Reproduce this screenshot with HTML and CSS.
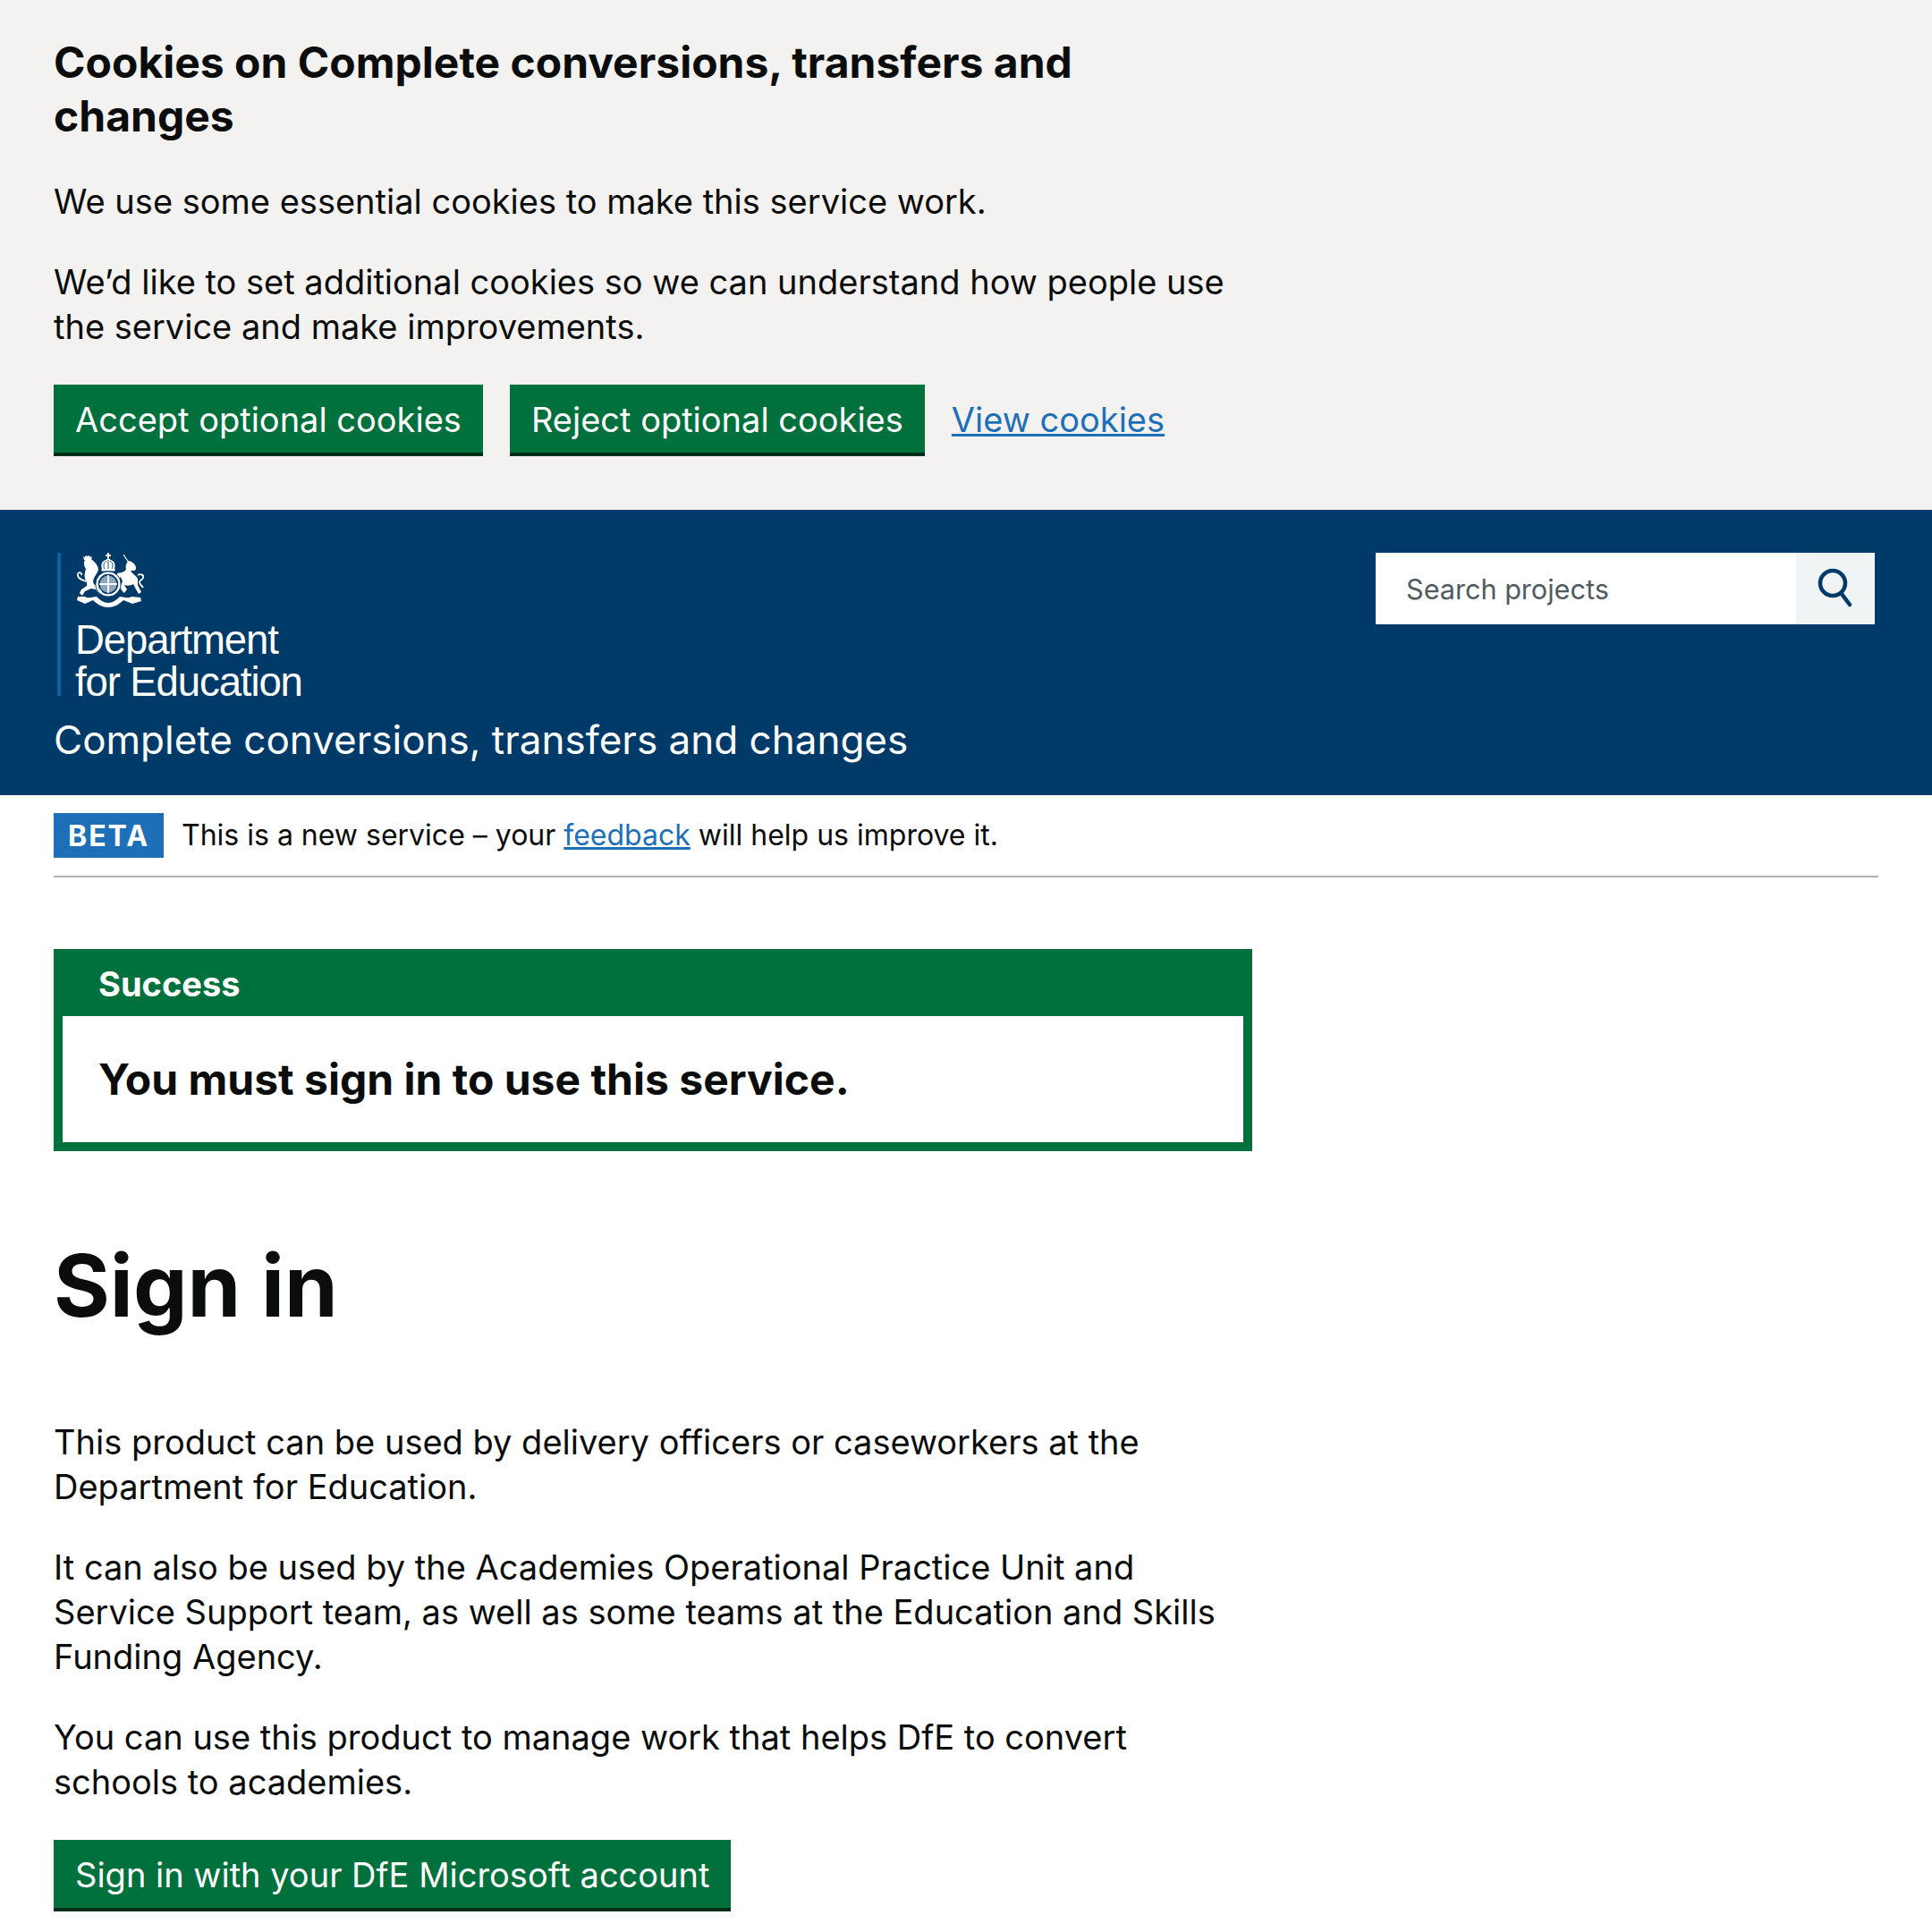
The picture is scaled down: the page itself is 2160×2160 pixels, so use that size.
FILE: index.html
```html
<!DOCTYPE html>
<html lang="en">
<head>
<meta charset="utf-8">
<title>Sign in</title>
<link rel="stylesheet" href="styles.css">
</head>
<body>
<section class="cookie">
  <h2 class="cookie-title">Cookies on Complete conversions, transfers and changes</h2>
  <div class="cookie-copy">
    <p>We use some essential cookies to make this service work.</p>
    <p>We’d like to set additional cookies so we can understand how people use the service and make improvements.</p>
  </div>
  <div class="cookie-actions">
    <a class="btn" href="#">Accept optional cookies</a>
    <a class="btn" href="#">Reject optional cookies</a>
    <a class="link" href="#">View cookies</a>
  </div>
</section>
<header class="header">
  <div class="header-top">
    <div class="logo">
      <svg class="crest" viewBox="5 6 80 64" aria-hidden="true">
        <g fill="#fff">
          <path d="M42 6h2v2h2v2h-2v2h-2v-2h-2V8h2z"/>
          <path d="M36 24C34 18 37 15 40 14l3-2 3 2c3 1 6 4 4 10z"/>
          <path d="M35.500 24h15v2.500h-15z"/>
          <path d="M16 14l-1-4 2 1 1-2 2 1 2-1 1 2 2-1-1 4z"/>
          <path d="M17 14C15 17 16 21 18 24 17 27 16 31 17 35c1 3 3 5 2 8l-6 4-2 4 3 3 3-5 7-3 5 1 4 5 3-3-5-5-4-3c-2-3 0-7 2-10s4-6 2-10c-2-4-5-6-7-8z"/>
          <path d="M66 15c4 1 8 4 8 8s-4 3-6 3c2 4 6 5 8 9v7l4 8-3 2-4-7-2-4c-3 2-7 2-10 1l3 5-3 4-3-3-2-4 3-6-2-5-2 2-3-2 1-4 5-1c2-1 4-1 5-4-1-3 0-7 3-9z"/>
          <path d="M9 55h8c4 3 9 0 13 0 4 4 8 7 13 7s9-3 13-7c4 0 9 3 13 0l10 1 1 4-10 3-10-4c-5 5-11 8-17 8s-12-3-17-8l-9 4-9-4z"/>
          <circle cx="43" cy="41" r="9.500" opacity=".55"/>
        </g>
        <g fill="none" stroke="#fff">
          <path d="M60 8l6 9" stroke-width="1.200"/>
          <path d="M18 38c-6-2-10-5-9-8s5-2 4 1" stroke-width="1.800"/>
          <path d="M76 31c4-2 7 0 6 3s-4 2-4 5 3 4 4 6" stroke-width="1.800"/>
          <circle cx="43" cy="41" r="12.500" stroke-width="2.600"/>
          <path d="M43 31v20M33 41h20" stroke-width="1.800"/>
        </g>
        <g fill="none" stroke="#003a69" stroke-width=".9">
          <path d="M39 24c-2-4-1-7 2-9M47 24c2-4 1-7-2-9M43 14v10"/>
          <circle cx="43" cy="41" r="14.300"/>
        </g>
      </svg>
      <div class="logo-name">Department<br>for Education</div>
    </div>
    <form class="search">
      <div class="search-input">Search projects</div>
      <button class="search-btn" type="button" aria-label="Search">
        <svg viewBox="0 0 40 48" class="search-icon" aria-hidden="true">
          <circle cx="17" cy="18" r="14" fill="none" stroke="#003a69" stroke-width="4.500"/>
          <path d="M27 30l9 12" fill="none" stroke="#003a69" stroke-width="4.500" stroke-linecap="round"/>
        </svg>
      </button>
    </form>
  </div>
  <div class="service">Complete conversions, transfers and changes</div>
</header>
<div class="page">
  <div class="phase">
    <strong class="tag">BETA</strong>
    <span>This is a new service – your <a href="#">feedback</a> will help us improve it.</span>
  </div>
  <main class="main">
    <div class="notice">
      <div class="notice-head">Success</div>
      <div class="notice-body">You must sign in to use this service.</div>
    </div>
    <h1 class="title">Sign in</h1>
    <div class="copy">
      <p>This product can be used by delivery officers or caseworkers at the Department for Education.</p>
      <p>It can also be used by the Academies Operational Practice Unit and Service Support team, as well as some teams at the Education and Skills Funding Agency.</p>
      <p>You can use this product to manage work that helps DfE to convert schools to academies.</p>
    </div>
    <a class="btn" href="#">Sign in with your DfE Microsoft account</a>
  </main>
</div>
</body>
</html>
```
FILE: styles.css
```css
* { box-sizing: border-box; }
html, body { margin: 0; padding: 0; }
body { font-family: Inter, "Liberation Sans", sans-serif; font-size: 38px; line-height: 50px; color: #0b0c0c; background: #fff; }
p { margin: 0 0 40px; }
a { color: #1d70b8; }

.cookie { background: #f3f2f1; padding: 40px 60px 60px; }
.cookie-title { margin: 0 0 40px; max-width: 1340px; font-size: 48px; line-height: 60px; font-weight: 700; }
.cookie-copy { max-width: 1340px; }
.cookie-actions { display: flex; align-items: flex-start; gap: 30px; }
.link { font-size: 38px; line-height: 78px; }

.btn { display: inline-block; background: #00703c; color: #fff; text-decoration: none; font-size: 38px; line-height: 38px; padding: 20px 24px 18px; box-shadow: 0 4px 0 #002d18; height: 76px; margin-bottom: 4px; }

.header { background: #003a69; color: #fff; padding: 48px 60px 0; height: 319px; }
.header-top { display: flex; justify-content: space-between; align-items: flex-start; padding-left: 4px; padding-right: 4px; }
.logo { border-left: 4px solid #0f5fa8; height: 160px; padding-left: 16px; }
.crest { display: block; width: 80px; height: 64px; margin-left: -1px; }
.logo-name { font-family: "Liberation Sans", Arial, sans-serif; font-size: 45.500px; line-height: 47px; letter-spacing: -1.100px; margin-top: 10px; }
.search { display: flex; width: 558px; height: 80px; }
.search-input { flex: 1; background: #fff; color: #505a5f; font-size: 30.600px; line-height: 82px; padding-left: 34px; }
.search-btn { width: 88px; border: 0; padding: 0; background: #f0f4f5; display: flex; align-items: center; justify-content: center; }
.search-icon { width: 40px; height: 48px; }
.service { font-size: 44px; line-height: 59px; margin-top: 20px; }

.page { padding: 0 60px; }
.phase { display: flex; align-items: center; gap: 20px; height: 92px; border-bottom: 2px solid #b1b4b6; padding-bottom: 20px; padding-top: 20px; width: 2040px; font-size: 32px; line-height: 50px; }
.tag { background: #1d70b8; color: #fff; font-size: 32px; line-height: 52px; height: 50px; padding: 0 16px; letter-spacing: 2px; font-weight: 700; }

.main { padding-top: 80px; }
.notice { width: 1340px; background: #00703c; border: 10px solid #00703c; }
.notice-head { color: #fff; font-weight: 700; font-size: 38px; line-height: 60px; height: 66px; padding: 0 40px; margin-top: -1px; }
.notice-body { background: #fff; font-size: 48px; line-height: 62px; font-weight: 700; padding: 40px; height: 141px; }
.title { margin: 100px 0 100px; font-size: 96px; line-height: 100px; font-weight: 700; }
.copy { max-width: 1340px; }
.copy p:last-child { margin-bottom: 40px; }
```
